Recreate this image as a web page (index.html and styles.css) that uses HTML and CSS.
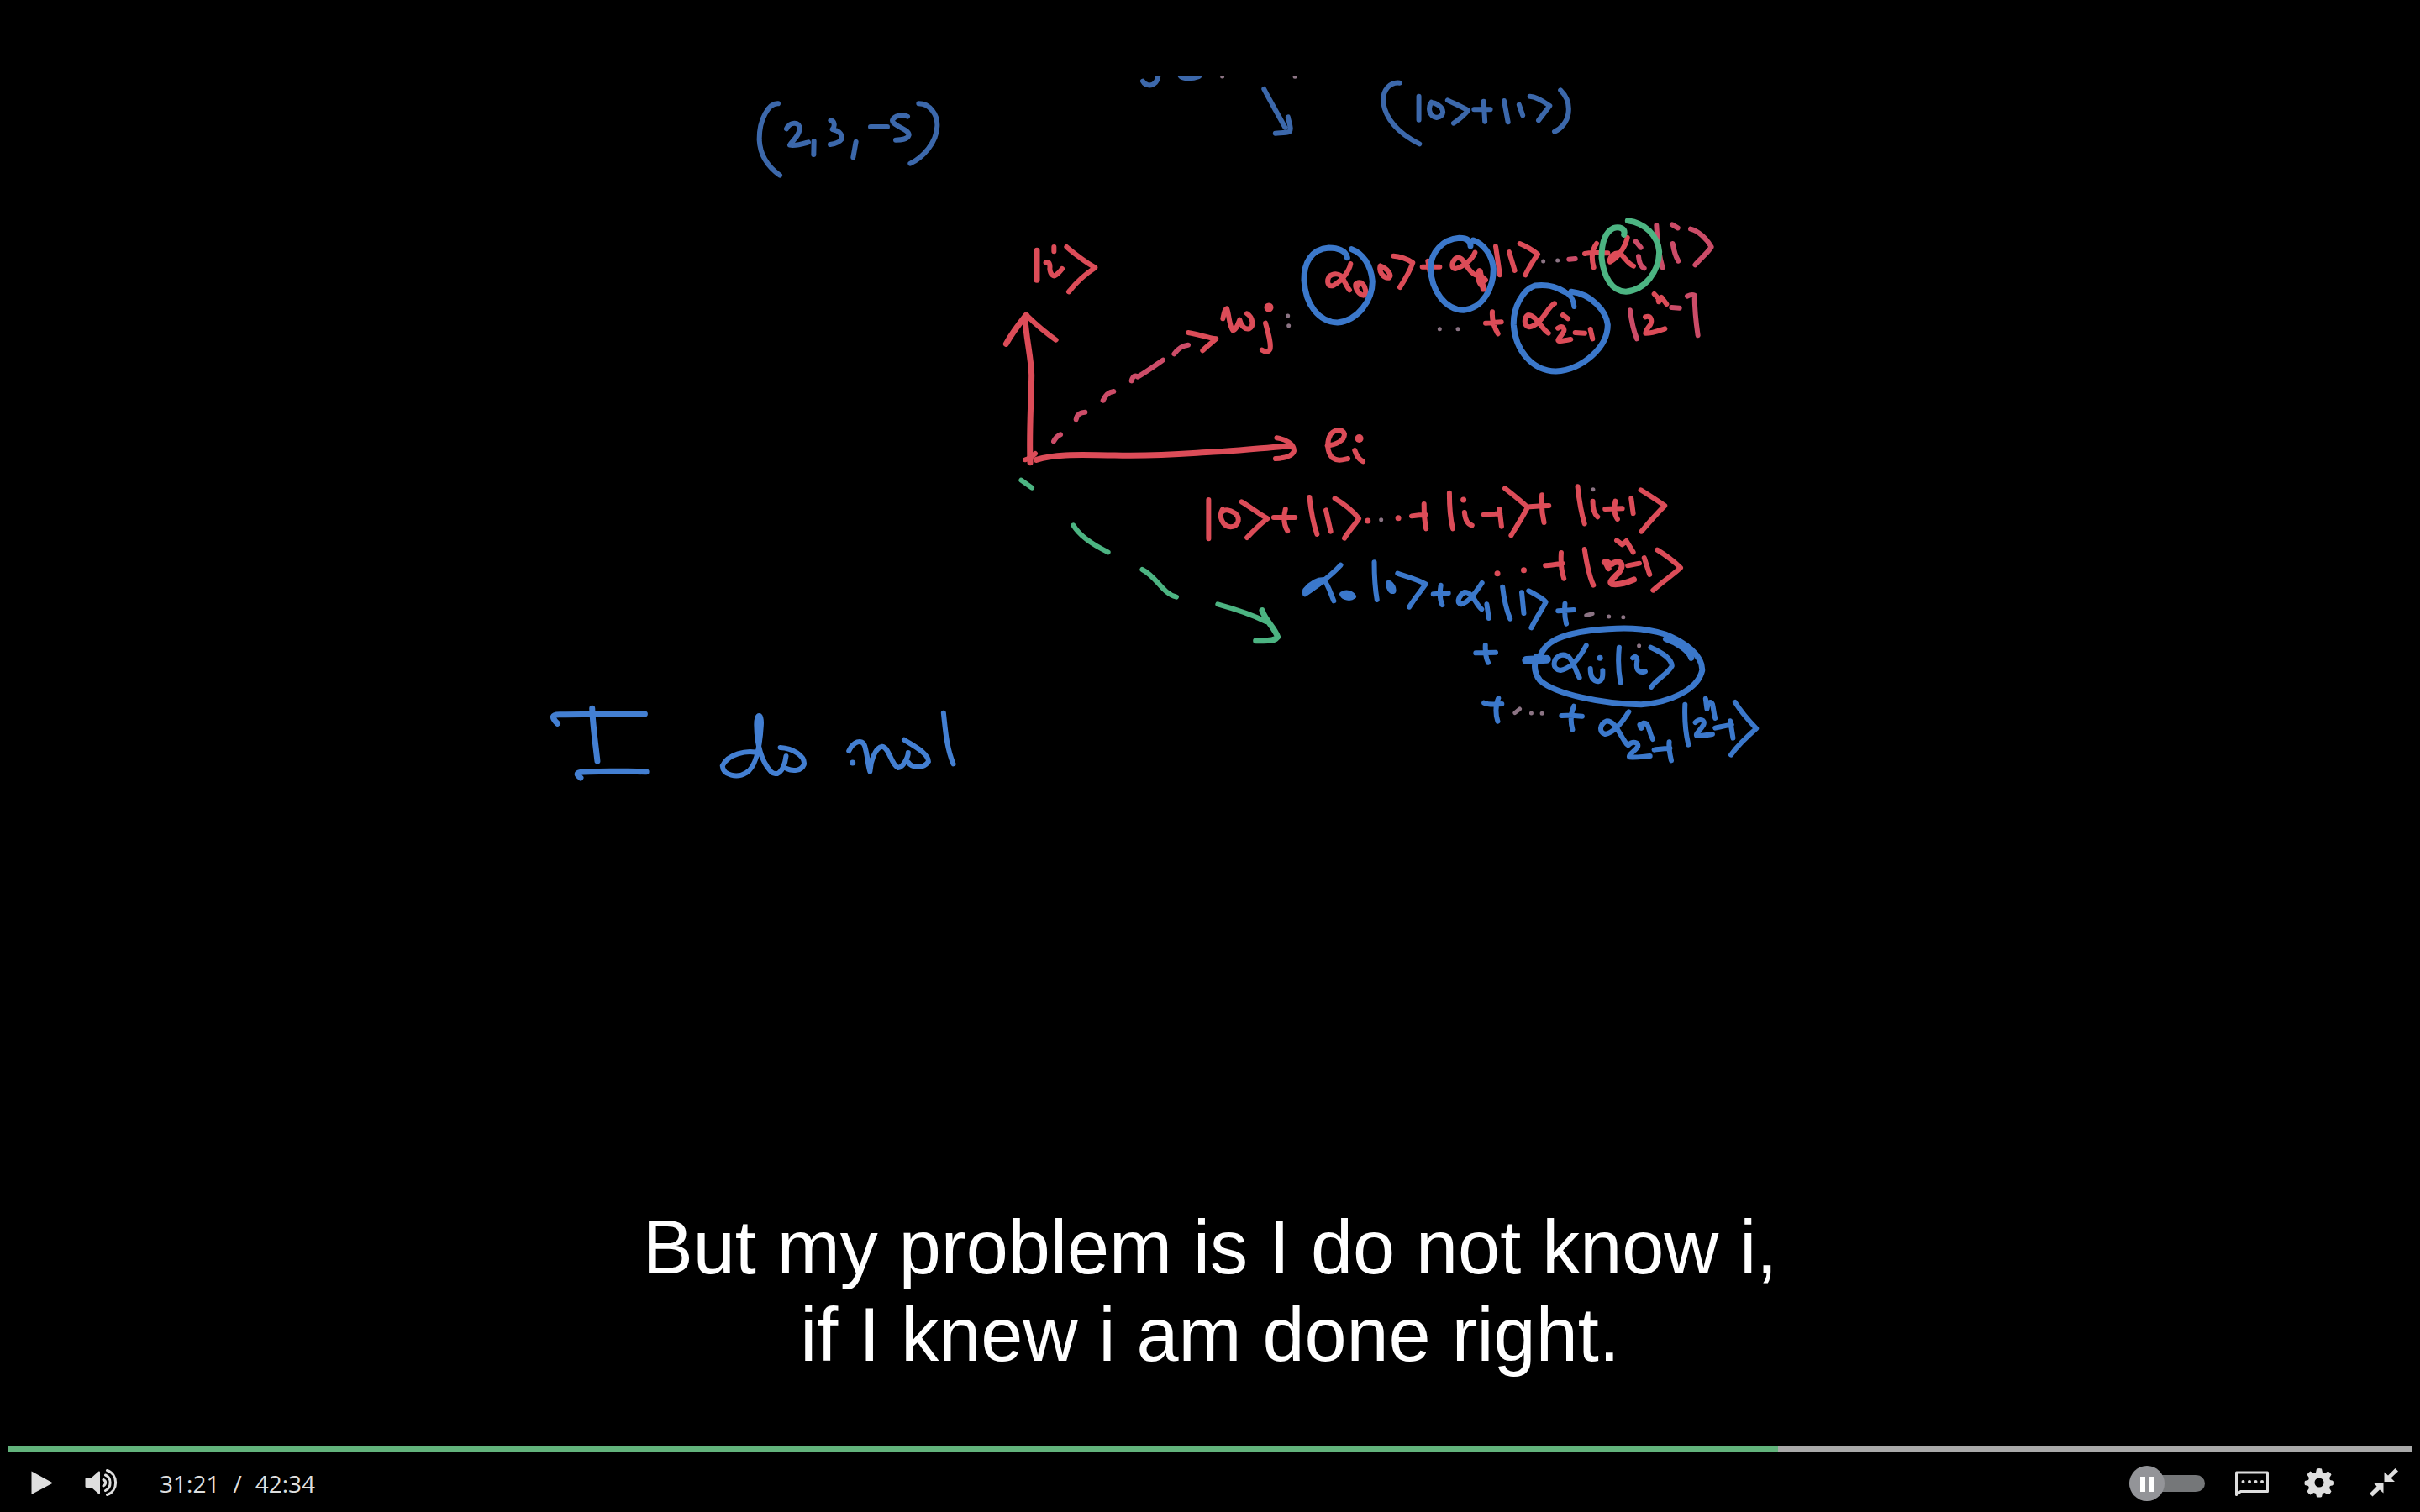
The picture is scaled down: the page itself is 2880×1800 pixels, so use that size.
FILE: index.html
```html
<!DOCTYPE html>
<html lang="en">
<head>
<meta charset="utf-8">
<title>Lecture video</title>
<link rel="stylesheet" href="styles.css">
</head>
<body>
<main class="player">
  <svg class="frame" viewBox="0 90 2880 1620" role="img" aria-label="Handwritten lecture board">
    <!-- vector (2,3,-5) -->
    <svg class="ink blue-dim" x="860" y="70" width="520" height="160" viewBox="0 0 1560 480" preserveAspectRatio="none">
      <path d="M198 160C165 158 130 215 131 290C134 350 165 388 204 416M228 250C240 225 275 222 275 250C272 280 245 295 240 308C262 312 285 304 306 298M326 294L325 342M385 220C400 222 402 240 392 252C420 258 430 275 424 288C415 300 398 304 384 306M476 296L466 352M528 243H588M660 206C645 198 612 202 606 220C606 240 665 250 665 272C660 290 635 290 618 290M700 160C740 160 768 200 766 240C764 300 715 352 670 374"/>
    </svg>
    <!-- top state and arrow -->
    <svg class="ink blue-dim" x="1340" y="70" width="560" height="130" viewBox="0 0 1568 390" preserveAspectRatio="none">
      <path d="M56 80C65 98 85 98 98 85C106 76 108 66 108 50M460 108C480 150 505 195 530 245M540 208C545 235 552 250 545 260C530 266 515 264 498 266M912 86C880 82 855 110 857 155C866 220 915 270 978 304M976 134V218M1018 155C1005 175 1010 205 1035 210C1062 205 1062 180 1040 165C1030 158 1022 155 1018 158M1072 148C1095 160 1120 172 1140 184C1128 200 1112 215 1092 230M1160 181H1214M1192 152L1196 224M1260 150L1273 226M1310 164L1322 202M1346 134C1370 135 1395 155 1412 168C1400 185 1385 205 1375 220M1448 112C1470 135 1478 165 1474 195C1470 225 1450 250 1428 260"/>
      <path class="bold" d="M186 58C195 66 220 66 240 58"/>
      <path class="speck" d="M321 58V63M563 58V64"/>
    </svg>
    <!-- axes, |i> and w_j -->
    <svg class="ink red" x="1160" y="260" width="400" height="320" viewBox="0 0 1200 960">
      <path class="heavy" d="M222 115V220M112 448C130 415 160 375 184 345M180 360C184 430 202 500 203 560C202 650 194 750 198 872M220 862C300 838 400 846 500 846C650 850 750 840 850 834C950 830 1040 818 1130 812"/>
      <path d="M283 102V118M254 158C265 150 270 165 268 180C270 200 280 210 290 202C300 196 306 188 312 180M328 102C355 125 395 155 430 176C400 195 365 225 336 262M184 345C215 375 255 410 290 434M180 862C190 860 205 850 216 840M1078 784C1110 788 1140 805 1140 830C1135 850 1105 856 1074 858M762 408C790 412 830 425 862 430C845 445 825 460 814 472M886 358C890 340 892 325 900 322C908 340 908 385 922 400C935 398 940 375 946 362C952 385 965 398 980 394C998 385 994 355 972 340M1038 374C1048 410 1060 450 1054 468C1048 480 1035 476 1026 470"/>
      <path class="pink" d="M282 796C288 785 298 775 306 772M362 718C365 700 378 692 394 692M458 650C466 632 480 620 496 618M560 580C565 560 575 560 582 566C610 550 645 525 672 506M712 484C725 465 745 454 762 452"/>
      <path class="blot" d="M1050 318h0"/>
      <path class="speck" d="M1118 348h0M1121 383h0"/>
    </svg>
    <!-- amplitudes of w_j, left part -->
    <svg class="ink red" x="1520" y="240" width="300" height="220" viewBox="0 0 900 660">
      <path d="M262 222C258 245 235 280 200 300C180 305 176 285 185 268C200 255 225 255 235 275C242 290 250 305 258 316M368 230C362 250 378 275 400 272C410 262 395 240 368 230M415 194C435 195 465 205 484 218C475 245 455 280 438 306M518 233H580M538 212L545 250M706 182C695 210 660 235 635 240C620 238 622 215 638 202C660 195 665 215 680 235C690 250 700 258 708 262M780 160L795 262M828 180L848 246M744 434L800 430M768 394C766 420 775 450 788 472"/>
      <path d="M280 295C278 312 292 332 308 335C322 328 315 302 300 290C288 286 280 292 286 302"/>
      <path class="heavy" d="M722 248C715 270 720 290 732 300M722 262L742 280M724 250L736 312"/>
      <path class="speck" d="M580 455h0M645 455h0"/>
      <path class="blue heavy" d="M250 200C245 175 215 165 185 165C120 170 95 220 96 280C100 370 150 430 215 432C290 425 340 350 340 285C335 225 305 185 266 170M690 158C690 135 670 130 650 130C590 135 550 180 547 235C550 320 600 385 665 388C735 380 772 310 772 240C768 190 735 150 700 138"/>
    </svg>
    <!-- amplitudes of w_j, right part -->
    <svg class="ink red" x="1780" y="240" width="300" height="220" viewBox="0 0 900 660">
      <path d="M86 150C110 160 135 175 150 188C135 210 118 235 106 262M318 186C340 180 370 184 400 184M360 150C345 170 340 200 350 235M470 128C465 155 440 200 408 215C405 195 425 180 445 185C460 200 475 225 492 230M534 412C555 405 560 425 552 440C540 455 535 465 535 470C560 470 580 462 604 454M210 364C185 375 165 440 120 448C100 445 100 415 115 405C145 405 160 450 188 470M222 452C240 440 250 455 240 470C225 490 220 495 225 498C240 498 255 494 268 492M240 405L258 418M284 468L318 470M338 456L346 490M566 330L580 345L582 358L592 342L610 366"/>
      <path class="pink" d="M262 206L284 204M500 142L518 164M510 196C512 215 518 232 530 238M574 85C576 130 582 190 596 236M630 82L650 94M632 150C636 175 642 195 652 212M696 98C725 105 755 135 770 162C755 185 730 205 712 226M480 388C485 430 492 460 504 490M628 378L656 380M684 338C695 332 705 332 710 335C710 380 715 430 722 478"/>
      <path class="speck" d="M170 213h0M221 210h0"/>
      <path class="green heavy" d="M458 118C465 95 440 88 420 95C390 110 378 150 378 200C385 270 415 320 465 322C535 315 582 250 584 180C580 120 530 75 472 68"/>
      <path class="blue heavy" d="M245 322C210 300 180 295 140 300C95 315 62 380 64 440C70 530 130 605 215 606C310 600 400 520 400 440C395 390 340 330 270 322"/>
      <path class="blue" d="M280 375C277 345 265 330 245 322"/>
    </svg>
    <!-- e_i and the red superposition -->
    <svg class="ink red" x="1400" y="500" width="640" height="220" viewBox="0 0 1568 660" preserveAspectRatio="none">
      <path d="M440 92C465 88 490 75 490 50C485 32 465 30 450 50C438 75 438 115 455 135C470 148 485 142 500 138M520 108C525 125 530 140 544 148M94 285V424M134 320C122 345 135 380 158 382C182 380 188 350 170 332C155 320 140 318 134 328M190 292C215 310 240 335 266 352C245 370 225 395 206 420M284 348H346M318 318C312 345 314 375 324 396M388 276C392 320 398 365 410 408M436 322L450 398M462 280C490 300 515 325 532 352C520 375 500 400 490 422M686 343C700 340 715 338 726 338M722 300C722 330 724 365 728 388M796 260C796 300 798 350 806 388M840 330C842 355 848 372 862 376M896 338C915 335 930 335 944 335M942 318L948 380M958 244C985 270 1010 295 1024 312C1010 345 992 380 976 412M1030 310C1050 308 1070 306 1086 306M1066 268C1064 300 1066 335 1072 366M1170 238C1174 285 1180 330 1190 370M1214 290C1214 315 1218 335 1228 346M1250 318L1300 316M1280 290C1275 315 1278 340 1286 354M1326 280L1332 334M1354 250C1380 270 1405 290 1424 306C1400 335 1375 370 1356 398M1076 520C1095 518 1110 515 1126 512M1122 474C1120 510 1124 545 1130 566M1190 462C1196 510 1202 555 1216 590M1284 430L1300 445L1312 432L1332 472M1316 520L1350 512M1364 492L1380 552M1402 464C1430 485 1455 510 1470 528C1445 555 1415 580 1390 608"/>
      <path class="heavy" d="M1248 508C1265 502 1262 525 1275 510C1300 500 1305 520 1290 545C1270 570 1260 580 1270 586C1290 590 1315 580 1334 570M1252 510L1260 530"/>
      <path class="bold" d="M533 66h0"/>
      <path class="dot" d="M558 360h0M647 350h0M837 285h0M936 548h0M1013 536h0"/>
      <path class="speck" d="M597 356h0M1215 248h0"/>
    </svg>
    <!-- the blue superposition -->
    <svg class="ink blue" x="1500" y="640" width="640" height="300" viewBox="0 0 1568 900" preserveAspectRatio="none">
      <path d="M234 98C210 130 180 160 130 202L130 188C145 165 165 150 185 150C198 170 205 200 214 226M332 88C332 130 334 180 340 222M400 128C430 140 460 150 482 166C465 195 448 220 434 248M504 202L548 198M526 170C522 200 524 225 530 240M646 162C630 190 610 230 585 238C570 230 580 205 595 195C620 195 625 235 645 256M660 238L666 288M706 176C710 220 718 260 728 290M762 196L768 270M782 190C805 205 825 218 832 230C820 260 802 290 790 322M868 262L914 258M888 236C886 265 888 290 892 308M628 412L686 410M656 384C655 410 658 430 664 446M950 385C935 420 910 465 875 474C850 470 850 435 875 420C910 410 915 470 930 500M962 468C962 495 970 512 985 514C1000 510 998 490 998 475M1046 392C1042 440 1044 480 1050 518M1086 430C1092 422 1100 425 1098 445C1094 475 1105 485 1122 478M1138 392C1170 410 1198 430 1200 458C1190 485 1150 510 1140 534M652 590C670 600 690 594 704 594M694 574C684 600 686 635 692 656M878 636C900 634 920 636 938 638M914 602C904 630 904 660 910 686M1074 622C1060 650 1035 695 1005 702C985 695 990 665 1010 655C1035 655 1045 700 1068 738M1072 742C1085 725 1105 730 1100 748C1090 765 1072 775 1076 784C1095 786 1115 782 1136 780M1106 668C1110 690 1112 680 1116 662C1135 660 1130 690 1144 720M1148 758C1165 755 1180 752 1194 752M1192 730C1190 755 1194 775 1198 796M1238 596C1236 650 1240 700 1248 740M1268 660C1280 645 1298 650 1292 668C1282 690 1268 700 1272 708C1288 708 1305 705 1318 702M1298 575L1302 612C1305 590 1312 580 1318 595C1322 615 1322 630 1326 645M1326 680C1345 675 1360 670 1374 668M1370 655L1378 716M1384 588C1400 620 1425 655 1446 682C1420 710 1390 745 1372 776M238 202C242 216 262 220 272 210C266 198 250 192 238 202M374 164C372 180 380 194 388 192C390 180 384 166 374 160"/>
      <path class="heavy" d="M132 196L180 156M815 425C830 370 880 345 960 332C1060 318 1120 322 1180 345C1240 375 1290 420 1288 475C1275 545 1190 590 1110 596C1000 595 860 560 815 510C795 480 798 450 805 425M1182 362C1215 375 1250 405 1256 430"/>
      <path class="bold" d="M775 438L835 434"/>
      <path class="dot" d="M990 430h0"/>
      <path class="speck" d="M950 278L968 272M1016 282h0M1058 284h0M1104 386h0M742 626L756 612M790 627h0M821 628h0"/>
    </svg>
    <!-- dashed green arrow -->
    <svg class="ink green" x="1180" y="540" width="380" height="250" viewBox="0 0 1140 750">
      <path d="M106 95L144 122M292 256C315 295 360 325 416 352M538 414C590 440 610 500 660 512M808 538C870 555 930 575 980 600"/>
      <path class="heavy" d="M966 560C980 600 1010 620 1022 655C1010 672 975 668 944 668"/>
    </svg>
    <!-- I do not -->
    <svg class="ink blue-light" x="640" y="820" width="540" height="130" viewBox="0 0 1568 390" preserveAspectRatio="none">
      <path class="heavy" d="M68 124C45 100 50 92 75 92C170 92 270 88 370 90M188 70C190 130 200 200 206 258M148 318C125 300 140 296 180 296C250 292 310 296 375 296"/>
      <path d="M768 230C720 215 655 235 638 275C640 310 690 320 720 300C755 280 768 200 772 130C775 85 755 85 756 130C757 200 775 260 805 295C825 315 850 300 858 240M838 210C880 212 925 240 920 270C910 295 880 295 860 285M1075 222C1090 190 1120 175 1130 205C1140 240 1140 270 1148 296C1150 260 1165 210 1190 206C1215 210 1220 270 1245 282C1265 280 1280 240 1280 228M1266 182C1300 205 1350 230 1350 260C1330 290 1290 280 1280 262M1402 86C1408 140 1412 210 1436 268M764 110V230"/>
      <path class="dot" d="M1088 264h0"/>
    </svg>
  </svg>

  <p class="captions">But my problem is I do not know i,<br>if I knew i am done right.</p>

  <div class="controls">
    <input class="seek" type="range" min="0" max="2554" value="1881" aria-label="Seek" style="--played: 73.65%">
    <div class="bar">
      <div class="group left">
        <button class="icon" type="button" aria-label="Play">
          <svg viewBox="0 0 44 44"><path d="M7.500 7.500L33 21.500L7.500 35Z"/></svg>
        </button>
        <button class="icon" type="button" aria-label="Volume">
          <svg viewBox="0 0 44 44"><path d="M3 15H9L17.500 7.500Q19 7 19 8.500V33.500Q19 35 17.500 34.500L9 27H3Q1.500 27 1.500 25.500V16.500Q1.500 15 3 15Z"/><path class="line" d="M23 17.500C26.500 19 26.500 23 23 25M25.500 12C33 15 33 27 25.500 30.500M27.500 6.500C41 11 41 31 27.500 35.500"/></svg>
        </button>
      </div>
      <div class="time"><span>31:21</span><span>/</span><span>42:34</span></div>
      <div class="group right">
        <label class="toggle">
          <input type="checkbox" role="switch" aria-label="Pause at end">
          <svg viewBox="0 0 90 42"><circle cx="21" cy="21" r="21"/><path d="M13 13h6v18h-6zM23 13h7v18h-7z"/></svg>
        </label>
        <button class="icon" type="button" aria-label="Captions">
          <svg viewBox="0 0 44 44"><path class="line" d="M1.500 9H38.500V31.500H6.500L1.500 35.500V9Z"/><circle cx="9.500" cy="20" r="2"/><circle cx="17" cy="20" r="2"/><circle cx="24.500" cy="20" r="2"/><circle cx="32" cy="20" r="2"/></svg>
        </button>
        <button class="icon" type="button" aria-label="Settings">
          <svg viewBox="0 0 44 44"><path fill-rule="evenodd" d="M17 4.500Q20 3.500 23 4.500L24 9L26.500 10L30.500 7.500Q33.500 9 34.500 11.500L32 15.500L33 18L37.500 19Q38.500 21.500 37.500 24L33 25L32 27.500L34.500 31.500Q33.500 34 30.500 35.500L26.500 33L24 34L23 38Q20 39 17 38L16 34L13.500 33L9.500 35.500Q7 34 5.500 31.500L8 27.500L7 25L3 24Q2 21.500 3 19L7 18L8 15.500L5.500 11.500Q7 9 9.500 7.500L13.500 10L16 9ZM20 15.500A5.500 5.500 0 1 0 20 26.500A5.500 5.500 0 1 0 20 15.500Z"/></svg>
        </button>
        <button class="icon" type="button" aria-label="Exit full screen">
          <svg viewBox="0 0 44 44"><path d="M17.500 8.500L22 12.500L30.500 4L34 7.500L25.500 15.500L30 20H17.500ZM16.500 21H4.500L8.500 25.500L0 34L3.500 37.500L12 29.500L16.500 33.500Z"/></svg>
        </button>
      </div>
    </div>
  </div>
</main>
</body>
</html>
```
FILE: styles.css
```css
* {
  box-sizing: border-box;
}

body {
  margin: 0;
  background: #000;
  color: #fff;
}

/* Picture, captions and controls share one grid cell. */
.player {
  display: grid;
  grid-template-columns: minmax(0, 1fr);
  min-height: 100vh;
}

.player > * {
  grid-area: 1 / 1;
}

.frame {
  width: 100%;
  align-self: center;
}

/* The pen strokes of the video are slightly out of focus. */
.ink path {
  fill: none;
  stroke: currentColor;
  stroke-width: 6px;
  stroke-linecap: round;
  stroke-linejoin: round;
  vector-effect: non-scaling-stroke;
  filter: blur(1px);
}

.blue-dim { color: #3c68ab; }
.blue { color: #3b78cb; }
.blue-light { color: #437fd2; }
.red { color: #dc4c58; }
.pink { color: #cc4c68; }
.green { color: #4cb482; }

.ink .heavy { stroke-width: 7px; }
.ink .bold { stroke-width: 10px; }
.ink .blot { stroke-width: 11px; }
.ink .dot { stroke-width: 7px; }
.ink .speck {
  color: #8c7484;
  stroke-width: 5px;
}

.captions {
  align-self: end;
  margin: 0;
  padding-bottom: 159px;
  font: 90px/104px "Liberation Sans", Arial, sans-serif;
  text-align: center;
}

.controls {
  align-self: end;
  display: flex;
  flex-direction: column;
  gap: 16px;
  padding: 0 10px 12px;
}

.seek {
  appearance: none;
  width: 100%;
  height: 6px;
  margin: 0;
  background: linear-gradient(to right, #62b37c var(--played), #a9a9a9 var(--played));
}

.seek::-webkit-slider-thumb {
  appearance: none;
  width: 0;
  height: 6px;
}

.bar {
  display: flex;
  align-items: center;
  padding: 0 6px 0 20px;
}

.group {
  display: flex;
  align-items: center;
}

.left {
  gap: 26px;
}

.right {
  gap: 36px;
  margin-left: auto;
}

.icon {
  width: 44px;
  height: 44px;
  padding: 0;
  border: 0;
  background: none;
  color: #dedede;
}

.icon svg {
  display: block;
  width: 44px;
  height: 44px;
  fill: currentColor;
}

.icon .line {
  fill: none;
  stroke: currentColor;
  stroke-width: 3px;
  stroke-linecap: round;
  stroke-linejoin: round;
}

.time {
  display: flex;
  gap: 16px;
  margin-left: 46px;
  color: #dedede;
  font: 28px/44px "Open Sans", sans-serif;
}

.toggle {
  display: grid;
  align-items: center;
}

.toggle > * {
  grid-area: 1 / 1;
}

.toggle input {
  appearance: none;
  width: 90px;
  height: 20px;
  margin: 0;
  border-radius: 10px;
  background: #757779;
}

.toggle svg {
  width: 90px;
  height: 42px;
  pointer-events: none;
}

.toggle circle {
  fill: #939498;
}

.toggle path {
  fill: #fff;
}
```
